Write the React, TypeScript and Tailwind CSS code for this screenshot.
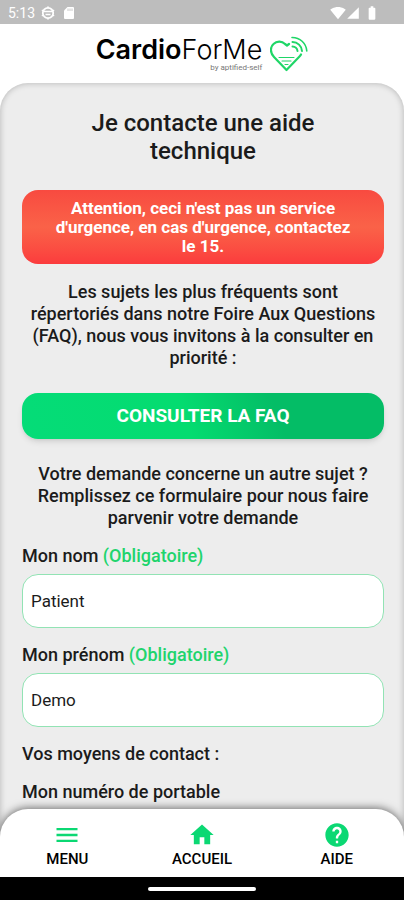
import { useState } from "react";
import { MdBatteryFull, MdHelp, MdHome, MdMenu, MdSignalCellular4Bar, MdSignalWifi4Bar } from "react-icons/md";
import type { IconType } from "react-icons";

interface FieldProps {
  id:       string;
  label:    string;
  value:    string;
  onChange: (v: string) => void;
}

const TABS: { label: string; href: string; icon: IconType }[] = [
  { label: "MENU",    href: "#menu",    icon: MdMenu },
  { label: "ACCUEIL", href: "#accueil", icon: MdHome },
  { label: "AIDE",    href: "#aide",    icon: MdHelp },
];

function StatusBar() {
  return (
    <div className="flex h-6 shrink-0 items-center bg-[#bdbdbd] pt-px pr-6 pl-2 text-white">
      <span className="text-sm">5:13</span>
      <svg viewBox="0 0 14 14" className="ml-1.5 size-3.5" fill="none" stroke="currentColor">
        <circle cx="7" cy="7" r="5.2" strokeWidth="1.8" />
        <path d="M3 5.5h8M4.5 8.5h5" strokeWidth="1.3" />
        <path d="M7 0.3v2M7 11.7v2M0.8 4l1.6 1M13.2 4l-1.6 1M0.8 10l1.6-1M13.2 10l-1.6-1" strokeWidth="1.2" />
      </svg>
      <svg viewBox="0 0 12 14" className="ml-2 h-3.5 w-3" fill="currentColor">
        <path d="M4.500 1H10a1 1 0 0 1 1 1v10a1 1 0 0 1-1 1H2a1 1 0 0 1-1-1V4.600z" />
        <path d="M5 2.500v2.500M7 2.500v2.500M9 2.500v2.500" stroke="#bdbdbd" strokeWidth="0.800" />
      </svg>
      <MdSignalWifi4Bar className="ml-auto size-4" />
      <MdSignalCellular4Bar className="size-3.5" />
      <MdBatteryFull className="ml-1 size-4" />
    </div>
  );
}

function HeartLogo() {
  return (
    <svg viewBox="0 0 38 36" className="h-9 w-[38px]" fill="none" stroke="#1fd667" strokeLinecap="round">
      <path
        d="M31 18.5C30.5 19.5 30 20 29 21L16.5 34L4 21C0 17 0 11 3.5 8C7 4.5 12 5 15 8L17 9.500L19 8"
        strokeWidth="2.2"
        strokeLinejoin="round"
      />
      <path d="M22.5 10.5A5 5 0 0 1 27.5 15" strokeWidth="2" />
      <path d="M22.5 6A9.5 9.5 0 0 1 32 15" strokeWidth="2" />
      <path d="M22 1.5A14.5 14.5 0 0 1 36.8 15" strokeWidth="1.6" />
      <path d="M9 21.5H24M12 25H21M15 28.5H18" strokeWidth="1.1" />
    </svg>
  );
}

function Field({ id, label, value, onChange }: FieldProps) {
  return (
    <div className="flex flex-col gap-[7px]">
      <label htmlFor={id} className="text-lg leading-[22px] font-medium">
        {label} <span className="text-[#20d46c]">(Obligatoire)</span>
      </label>
      <input
        id={id}
        type="text"
        required
        value={value}
        onChange={(e) => onChange(e.target.value)}
        className="h-[54px] w-full rounded-2xl border border-[#92e3b4] bg-white px-2 text-[17px] outline-none"
      />
    </div>
  );
}

export default function App() {
  const [nom, setNom] = useState("Patient");
  const [prenom, setPrenom] = useState("Demo");

  return (
    <div className="flex h-screen flex-col overflow-hidden bg-white font-[Roboto,sans-serif] text-[#1b1b1b]">
      <StatusBar />

      <header className="flex h-[59px] shrink-0 items-center justify-center gap-2">
        <div className="flex flex-col items-end text-black">
          <span className="font-[Inter,sans-serif] text-[27px] leading-7">
            <b className="font-semibold">Cardio</b>
            <span className="font-light">ForMe</span>
          </span>
          <span className="text-[8px] leading-2 text-[#777]">by aptified-self</span>
        </div>
        <HeartLogo />
      </header>

      <main className="min-h-0 flex-1 overflow-y-auto rounded-t-[28px] bg-[#ededed] pt-[26px] pr-5 pl-[22px] shadow-[inset_0_0_6px_rgba(0,0,0,0.25)] [scrollbar-width:none]">
        <h1 className="px-12 text-center text-2xl leading-7 font-medium">Je contacte une aide technique</h1>

        <p className="mt-[25px] rounded-2xl bg-linear-to-b from-[#f84a40] via-[#fa6248] to-[#fb3b3d] px-8 pt-[9px] pb-2 text-center text-[17px] leading-[19px] font-bold text-white">
          Attention, ceci n'est pas un service d'urgence, en cas d'urgence, contactez le 15.
        </p>

        <p className="mt-[17px] text-center text-lg leading-[22px] font-medium">
          Les sujets les plus fréquents sont répertoriés dans notre Foire Aux Questions (FAQ), nous vous invitons à la
          consulter en priorité :
        </p>

        <button
          type="button"
          className="mt-6 h-[46px] w-full rounded-2xl bg-linear-[70deg] from-[#05dc78] from-0% via-[#04dc70] via-45% to-[#04bd66] to-70% text-[19px] font-bold text-white shadow-md"
        >
          CONSULTER LA FAQ
        </button>

        <p className="mt-6 text-center text-lg leading-[22px] font-medium">
          Votre demande concerne un autre sujet ? Remplissez ce formulaire pour nous faire parvenir votre demande
        </p>

        <form className="mt-4 flex flex-col gap-4 pb-10">
          <Field id="nom" label="Mon nom" value={nom} onChange={setNom} />
          <Field id="prenom" label="Mon prénom" value={prenom} onChange={setPrenom} />
          <p className="text-lg leading-[22px] font-medium">Vos moyens de contact :</p>
          <p className="text-lg leading-[22px] font-medium">Mon numéro de portable</p>
        </form>
      </main>

      <nav className="relative -mt-7 flex h-[68px] shrink-0 rounded-t-[28px] bg-white pt-3 shadow-[0_-1px_8px_rgba(0,0,0,0.55)]">
        {TABS.map(({ label, href, icon: Icon }) => (
          <a
            key={label}
            href={href}
            className="flex flex-1 flex-col items-center text-[15px] leading-5 font-medium text-black"
          >
            <Icon className="size-7 text-[#0bd873]" />
            {label}
          </a>
        ))}
      </nav>

      <div className="relative flex h-[23px] shrink-0 items-center justify-center bg-black">
        <div className="h-1 w-[108px] rounded-full bg-white" />
      </div>
    </div>
  );
}
